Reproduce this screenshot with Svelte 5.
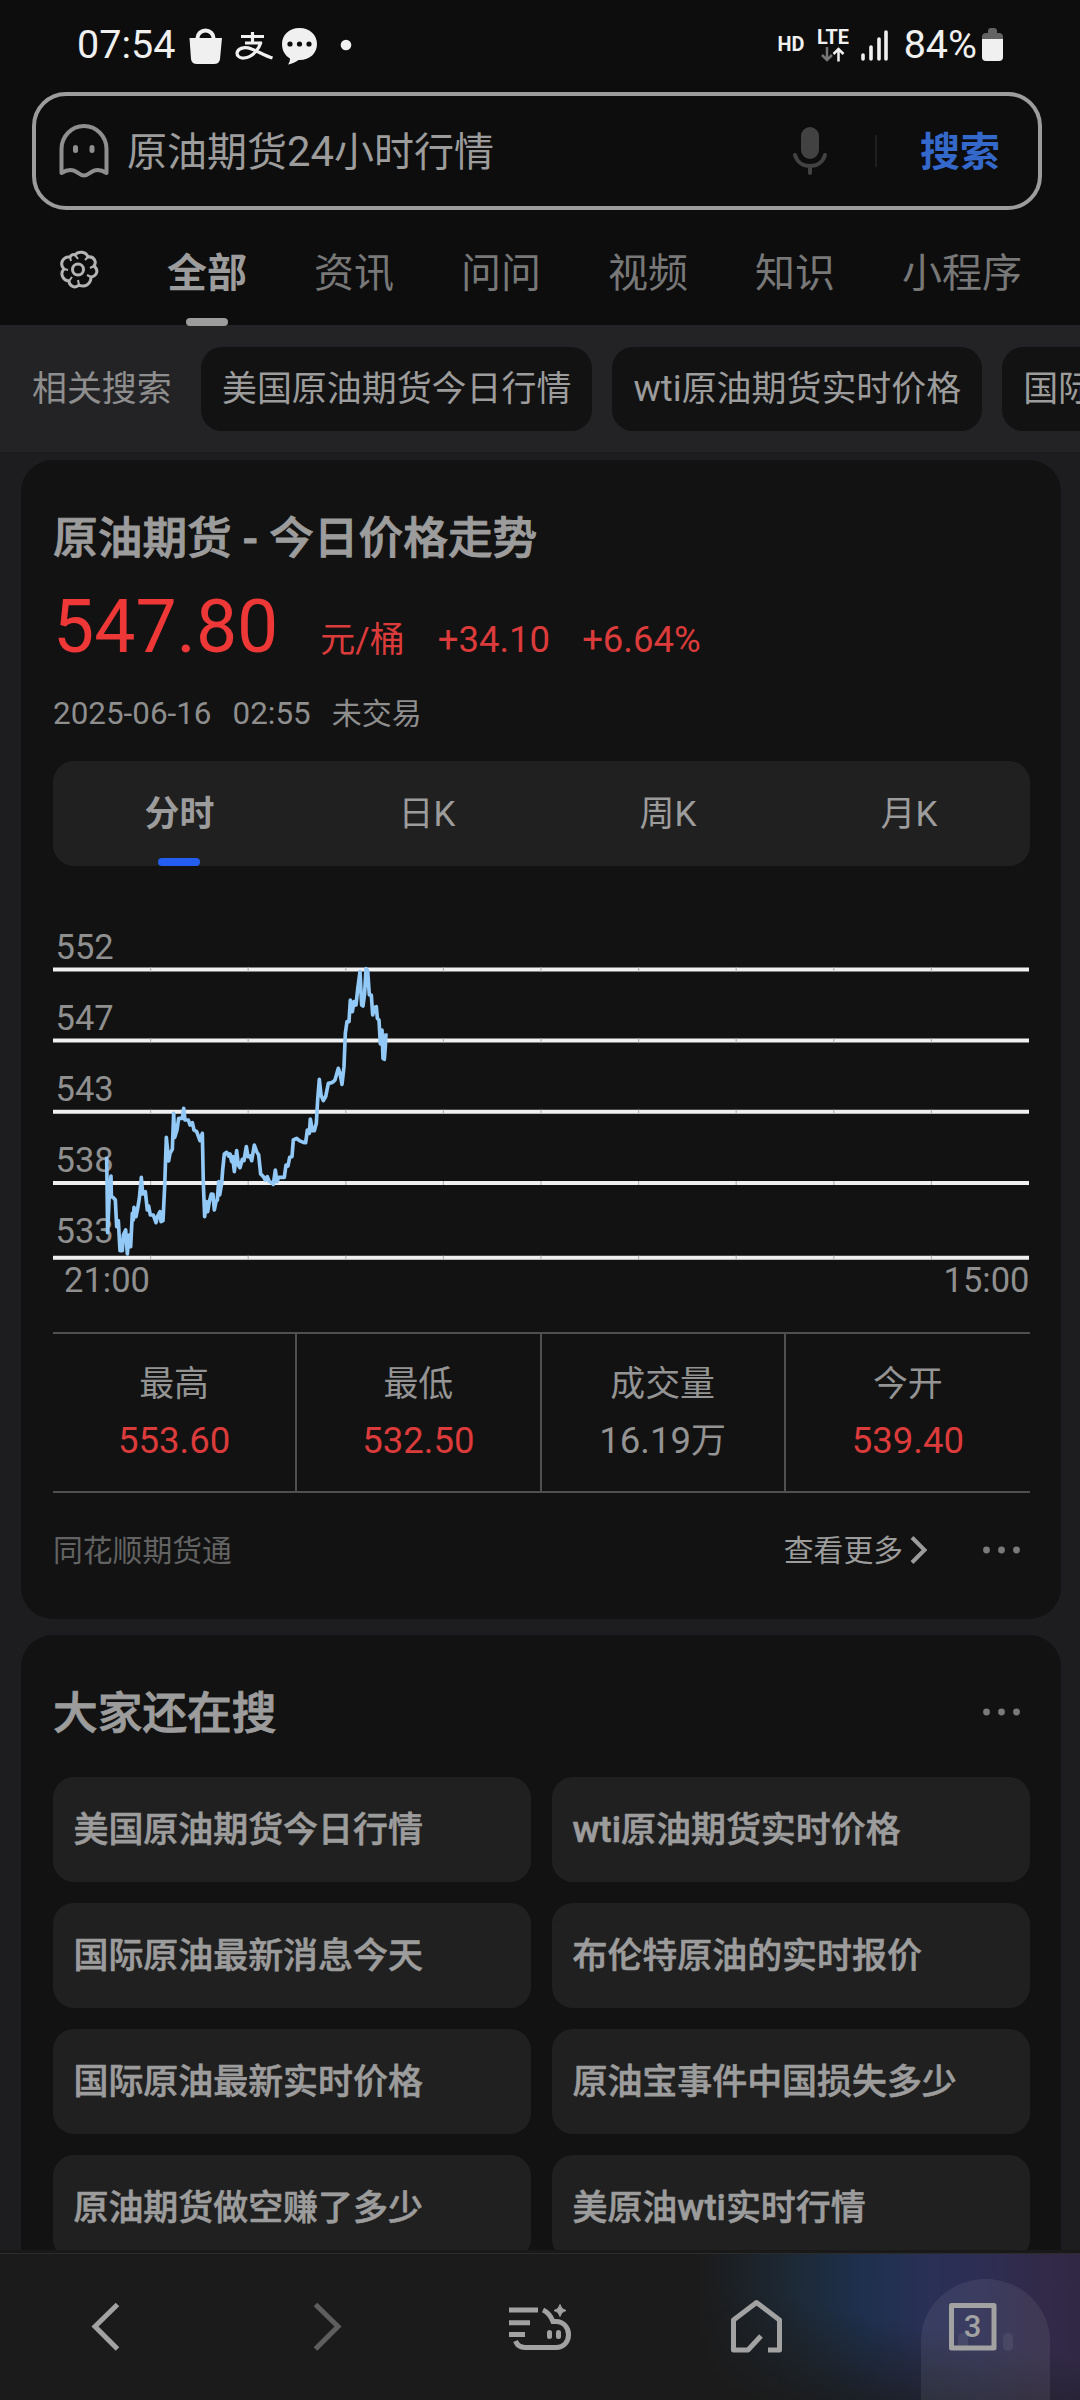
<script>
  const tabs = ['资讯', '问问', '视频', '知识', '小程序'];

  const periods = ['分时', '日K', '周K', '月K'];
  let period = '分时';

  const stats = [
    { label: '最高', value: '553.60', red: true },
    { label: '最低', value: '532.50', red: true },
    { label: '成交量', value: '16.19', unit: '万' },
    { label: '今开', value: '539.40', red: true },
  ];

  // [before, latin, after]
  const related = [
    ['美国原油期货今日行情'],
    ['', 'wti', '原油期货实时价格'],
    ['国际原油最新消息今天'],
  ];

  const suggestions = [
    ['美国原油期货今日行情'],
    ['', 'wti', '原油期货实时价格'],
    ['国际原油最新消息今天'],
    ['布伦特原油的实时报价'],
    ['国际原油最新实时价格'],
    ['原油宝事件中国损失多少'],
    ['原油期货做空赚了多少'],
    ['美原油', 'wti', '实时行情'],
  ];

  const levels = [
    { label: 552, line: 69.4, text: 58.7 },
    { label: 547, line: 140.4, text: 130 },
    { label: 543, line: 211.7, text: 201.3 },
    { label: 538, line: 283, text: 272 },
    { label: 533, line: 357.7, text: 342.6 },
  ];

  const ticks = [1, 2, 3, 4, 5, 6, 7, 8, 9].map(n => n * 97.6);

  // minute prices, in thirds of a pixel
  const points =
    '200,770 203,998 208,880 213,828 214,890 220,893 226,900 230,980 235,962 240,1052 247,1052 250,1005 257,990 ' +
    '262,1062 267,1005 272,1040 277,940 280,960 282,922 288,950 293,925 298,895 304,832 308,882 316,875 322,930 ' +
    '326,918 331,945 340,945 348,968 353,948 360,935 363,965 369,962 372,900 374,860 379,712 386,783 390,760 ' +
    '397,748 401,640 404,712 411,690 416,655 427,655 431,625 435,660 445,660 450,675 457,668 462,690 470,695 ' +
    '480,722 487,700 490,850 494,950 499,905 503,935 508,905 514,882 519,883 523,930 528,905 532,900 536,845 ' +
    '539,885 545,850 548,810 553,762 560,757 566,768 570,762 575,785 578,770 583,815 590,752 595,795 600,803 ' +
    '607,778 612,782 619,740 624,770 630,768 635,782 643,735 650,755 656,765 662,822 670,830 676,840 682,830 ' +
    '688,845 695,848 700,853 706,810 711,845 716,832 733,832 738,795 744,798 749,772 756,770 760,720 770,715 ' +
    '778,722 790,727 797,728 802,690 808,700 811,657 817,692 823,692 829,670 833,600 838,538 843,585 850,602 ' +
    '857,590 865,550 875,548 880,545 885,540 895,505 900,520 906,553 912,500 916,400 921,365 927,365 931,300 ' +
    '937,335 942,305 948,315 953,268 960,215 965,315 969,318 974,280 978,206 983,212 988,285 994,285 998,345 ' +
    '1004,322 1009,320 1012,355 1017,360 1021,432 1026,390 1029,475 1033,478 1036,440 1038,400';
</script>

<style>
  :global(body) {
    background: #1d1d1f;
  }

  main {
    width: 1080px;
    height: 2400px;
    overflow: hidden;
    display: flex;
    flex-direction: column;

    background: #1d1d1f;
    color: #9c9c9c;
    font-family: Roboto, "Noto Sans CJK SC", sans-serif;
    font-size: 34.95px;
    line-height: 1;
    white-space: nowrap;
  }

  svg {
    display: block;
    flex: none;
  }

  .latin {
    font-size: 1.045em;
    line-height: 0;
  }

  header {
    height: 325px;
    flex: none;
    background: #0d0d0d;
  }

  .status {
    height: 92px;
    padding: 0 77px;
    box-sizing: border-box;
    display: flex;
    justify-content: space-between;

    color: #f0f0f0;
    font-size: 39.5px;
    line-height: 89px;
  }
  .status > div {
    display: flex;
  }
  .status .notes {
    margin-left: 12px;
  }
  .status .signal {
    margin-right: 16px;
  }

  .search {
    width: 1010px;
    height: 118px;
    margin-left: 32px;
    padding: 0 38px 0 23px;
    box-sizing: border-box;
    border: 4px solid #9c9c9c;
    border-radius: 34px;

    display: flex;
    align-items: center;
    font-size: 40px;
  }
  .search .query {
    flex: 1;
    margin-left: 18px;
    padding-top: 4px;
  }
  .search .divider {
    width: 2px;
    height: 32px;
    margin: 0 43px 0 47px;
    background: #1f1f20;
  }
  .search .go {
    padding-top: 4px;
    color: #3568cb;
    font-weight: 700;
  }

  nav {
    height: 115px;
    padding-left: 59px;
    display: flex;

    color: #787878;
    font-size: 40px;
    line-height: 127px;
  }
  nav svg {
    margin: 40px 28px 0 0;
  }
  nav span {
    margin-left: 67px;
  }
  nav .active {
    margin-left: 40px;
    position: relative;
    color: #9c9c9c;
    font-weight: 700;
  }
  nav .active::after {
    content: "";
    position: absolute;
    left: 19px;
    top: 108px;
    width: 42px;
    height: 8px;
    border-radius: 4px;
    background: #9c9c9c;
  }

  .related {
    height: 127px;
    flex: none;
    padding-left: 32px;
    box-sizing: border-box;
    overflow: hidden;

    display: flex;
    align-items: center;
    gap: 20px;
    background: #232325;
  }
  .related .label {
    width: 149px;
    flex: none;
    padding-top: 3px;
    color: #8e8e8e;
  }
  .related .chip {
    height: 84px;
    flex: none;
    padding: 0 21px;
    border-radius: 21px;
    background: #121212;
    line-height: 86px;
  }

  .results {
    flex: 1;
    min-height: 0;
    overflow: hidden;
    padding: 8px 19px 0 21px;
  }

  .card {
    padding: 0 31px 0 32px;
    border-radius: 32px;
    background: #121212;
    overflow: hidden;
  }
  .card + .card {
    margin-top: 16px;
  }

  h2 {
    margin: 0;
    font-size: 44.7px;
    line-height: 45px;
    font-weight: 500;
    -webkit-text-stroke: 0.9px #9c9c9c;
  }

  .quote {
    height: 1159px;
  }
  .quote h2 {
    padding-top: 57px;
  }

  .price {
    height: 100px;
    margin-top: 15px;
    display: flex;
    align-items: baseline;
    color: #dc3b3b;
    font-size: 36.5px;
    line-height: 100px;
  }
  .price strong {
    color: #ee3737;
    font-size: 73.3px;
    font-weight: 400;
    margin-right: 42px;
  }
  .price .unit {
    font-size: 35px;
    margin-right: 33px;
  }
  .price .diff {
    margin-right: 32px;
  }

  .time {
    height: 30px;
    margin-top: 22px;
    display: flex;
    align-items: baseline;
    gap: 21px;
    font-size: 31.4px;
    line-height: 30px;
    color: #8e8e8e;
  }
  .time .state {
    font-size: 30px;
  }

  .periods {
    height: 105px;
    margin-top: 32px;
    border-radius: 21px;
    background: #202020;
    display: flex;
    justify-content: space-around;
    line-height: 107px;
  }
  .periods span {
    margin-left: -1px;
  }
  .periods .active {
    position: relative;
    font-weight: 700;
  }
  .periods .active::after {
    content: "";
    position: absolute;
    left: 13px;
    top: 97px;
    width: 42px;
    height: 8px;
    border-radius: 4px;
    background: #235ef0;
  }

  .chart {
    margin-top: 34px;
  }
  .chart text {
    fill: #8f8f8f;
    font-size: 34.5px;
  }
  .chart polyline {
    fill: none;
    stroke: #92c9f6;
    stroke-width: 11;
    stroke-linejoin: round;
  }

  .stats {
    height: 157px;
    margin-top: 22px;
    border: 2px solid #505050;
    border-width: 2px 0;
    display: grid;
    grid-template-columns: repeat(4, 1fr);
    text-align: center;
  }
  .stats > div {
    border-right: 2px solid #505050;
  }
  .stats > div:last-child {
    border: 0;
  }
  .stats p {
    margin: 0;
    height: 57px;
    line-height: 57px;
    color: #949494;
  }
  .stats p:first-child {
    margin-top: 22px;
  }
  .stats p.red {
    color: #dc3b3b;
  }

  .more {
    height: 114px;
    display: flex;
    align-items: center;
    color: #9c9c9c;
    font-size: 29.8px;
  }
  .more span {
    padding-top: 2px;
  }
  .more .source {
    flex: 1;
    color: #636363;
  }
  .more .arrow {
    margin: 0 51px 0 7px;
  }

  .also {
    height: 700px;
  }
  .also .head {
    height: 142px;
    padding-top: 11px;
    box-sizing: border-box;
    display: flex;
    align-items: center;
    justify-content: space-between;
  }
  .also h2 {
    padding-top: 5px;
  }
  .dots {
    padding-right: 7px;
    fill: #7a7a7a;
  }

  .grid {
    display: grid;
    grid-template-columns: 1fr 1fr;
    gap: 21px;
  }
  .grid > div {
    height: 105px;
    padding-left: 20.5px;
    border-radius: 21px;
    background: #202020;
    font-weight: 500;
    -webkit-text-stroke: 0.6px #9c9c9c;
    line-height: 108px;
  }

  footer {
    height: 150px;
    flex: none;
    padding-top: 3px;
    box-sizing: border-box;
    background: #191919;
  }
  .toolbar {
    height: 147px;
    box-sizing: border-box;
    border-top: 1px solid #2c2c2d;
    display: grid;
    grid-template-columns: repeat(5, 216px);

    background:
      linear-gradient(12deg, #1b1b1b 0, #1b1b1b 42%, rgba(27, 27, 27, 0) 72%),
      linear-gradient(90deg, #1b1b1b 700px, #1d2a38 800px, #1e304e 865px, #2a3056 930px, #2d2e54 980px, #322a48 1040px, #302845 1080px);
  }
  .toolbar svg {
    fill: none;
    stroke: #a2a2a2;
    stroke-width: 5;
  }
  .toolbar text {
    fill: #a2a2a2;
    stroke: none;
    font-size: 31px;
    font-weight: 500;
  }
  .toolbar .ghost {
    fill: rgba(255, 255, 255, 0.07);
    stroke: none;
  }
</style>

<main>

  <header>
    <div class="status">
      <div>
        07:54
        <svg class="notes" width="170" height="92" viewBox="187 0 170 92" fill="#f0f0f0">
          <path d="M189.500 38h32.500l-2 21q-.5 5-6 5h-17q-5.500 0-6-5z" />
          <path d="M197.500 40v-2a8 7.500 0 0 1 16 0v2" fill="none" stroke="#f0f0f0" stroke-width="4" />
          <g fill="none" stroke="#f0f0f0" stroke-width="3.200">
            <path d="M241 36.500h23M252.500 32v11M245 43h17" />
            <path d="M261 42c-2 7-8 15-17 16-5 .5-8-3-6.500-6.500 2-4.500 9-4.500 14-2.500 7 2.500 13 6.500 21 9" />
          </g>
          <path d="M299.500 28c10.500 0 17.500 7 17.500 16s-7 16-17.500 16h-1c-3 2-6 4-10.500 4.500 1.500-2 2-4 2-6-5-3-8-8-8-14.500 0-9 7-16 17.500-16z" />
          <g fill="#0d0d0d">
            <circle cx="290" cy="44" r="2.600" />
            <circle cx="299.500" cy="44" r="2.600" />
            <circle cx="309" cy="44" r="2.600" />
          </g>
          <circle cx="346" cy="45" r="5.300" />
        </svg>
      </div>
      <div>
        <svg class="signal" width="112" height="92" viewBox="776 0 112 92" fill="#f0f0f0">
          <text x="777.500" y="51" font-size="19.500" font-weight="700" textLength="27" lengthAdjust="spacingAndGlyphs">HD</text>
          <text x="817" y="44" font-size="19.500" font-weight="700" textLength="32" lengthAdjust="spacingAndGlyphs">LTE</text>
          <path d="M827 47v13M822 55l5 5 5-5" fill="none" stroke="#767676" stroke-width="2.500" />
          <path d="M838.500 61.500V49M833.500 54l5-5 5 5" fill="none" stroke="#f0f0f0" stroke-width="2.500" />
          <path d="M863 55v4M871 47v12M879 39v20M886 32v27" stroke="#f0f0f0" stroke-width="3.600" stroke-linecap="round" />
        </svg>
        84%
        <svg width="26" height="92" viewBox="977 0 26 92">
          <path d="M982 41v-4q0-4 4-4h2v-2q0-3 3-3h3q3 0 3 3v2h2q4 0 4 4v4z" fill="#636363" />
          <path d="M982 39h21v18q0 4-4 4h-13q-4 0-4-4z" fill="#f0f0f0" />
        </svg>
      </div>
    </div>

    <div class="search">
      <svg width="50" height="54" viewBox="0 1 50 54" fill="none" stroke="#8f8f8f" stroke-width="4" stroke-linejoin="round">
        <path d="M2.500 50V26a22.500 23 0 0 1 45 0V50c-4-2.500-8-3.500-12-2.500-4 1-6 5-10.500 5s-6.500-4-10.500-5c-4-1-8 0-12 2.500z" />
        <path d="M16.500 24.500v3M33 24.500v3" stroke-width="5" stroke-linecap="round" />
      </svg>
      <div class="query">原油期货<span class="latin">24</span>小时行情</div>
      <svg width="36" height="50" viewBox="0 0 36 50" fill="none" stroke="#424242" stroke-width="4" stroke-linecap="round">
        <rect x="9" y="1" width="18" height="32" rx="9" fill="#424242" stroke="none" />
        <path d="M3 29c2 7 8 11 15 11s13-4 15-11M18 41v6" />
      </svg>
      <div class="divider"></div>
      <div class="go">搜索</div>
    </div>

    <nav>
      <svg width="40" height="40" viewBox="0 0 40 40" fill="none" stroke="#b4b4b4" stroke-width="3" stroke-linejoin="round">
        <path d="M16 5c3-4 11-4 13 2 6-1 9 5 6 9 5 4 3 10-3 11 0 7-6 11-12 8-4 4-10 1-10-4-7-1-9-8-5-12C0 14 4 6 11 7c1-2 3-3 5-2z" />
        <path d="M16 5l3 4M29 7l-3 3M35 16l-4 2M32 27l-4-2M20 35l-1-5M10 31l3-4M5 19l4 1M11 7l1 4" stroke-width="2" />
        <circle cx="19" cy="19.500" r="5.500" />
      </svg>
      <span class="active">全部</span>
      {#each tabs as tab}
        <span>{tab}</span>
      {/each}
    </nav>
  </header>

  <div class="related">
    <div class="label">相关搜索</div>
    {#each related as [before, latin = '', after = '']}
      <div class="chip">{before}<span class="latin">{latin}</span>{after}</div>
    {/each}
  </div>

  <div class="results">

    <section class="card quote">
      <h2>原油期货 - 今日价格走势</h2>

      <div class="price">
        <strong>547.80</strong>
        <span class="unit">元/桶</span>
        <span class="diff">+34.10</span>
        <span>+6.64%</span>
      </div>

      <div class="time">
        <span>2025-06-16</span>
        <span>02:55</span>
        <span class="state">未交易</span>
      </div>

      <div class="periods">
        {#each periods as name}
          <span class:active={name === period}>{name}</span>
        {/each}
      </div>

      <svg class="chart" width="977" height="410" viewBox="0 0 977 410">
        {#each levels as level}
          <text x="2.500" y={level.text}>{level.label}</text>
          <line x1="0" x2="976" y1={level.line} y2={level.line} stroke="#f0f0f0" stroke-width="4" />
          {#each ticks as x}
            <line x1={x} x2={x} y1={level.line - 2} y2={level.line + 2} stroke="#b5b5b5" stroke-width="1.200" />
          {/each}
        {/each}
        <polyline {points} transform="translate(-13 0) scale(0.33333)" />
        <text x="11" y="391.500">21:00</text>
        <text x="976.500" y="391.500" text-anchor="end">15:00</text>
      </svg>

      <div class="stats">
        {#each stats as stat}
          <div>
            <p>{stat.label}</p>
            <p class:red={stat.red}><span class="latin">{stat.value}</span>{stat.unit ?? ''}</p>
          </div>
        {/each}
      </div>

      <div class="more">
        <span class="source">同花顺期货通</span>
        <span>查看更多</span>
        <svg class="arrow" width="18" height="30" viewBox="0 0 18 30" fill="none" stroke="#9c9c9c" stroke-width="4">
          <path d="M2 2.500L14.500 15 2 27.500" />
        </svg>
        <svg class="dots" width="44" height="8" viewBox="0 0 44 8">
          <circle cx="7.500" cy="4" r="3.400" />
          <circle cx="22.500" cy="4" r="3.400" />
          <circle cx="37.500" cy="4" r="3.400" />
        </svg>
      </div>
    </section>

    <section class="card also">
      <div class="head">
        <h2>大家还在搜</h2>
        <svg class="dots" width="44" height="8" viewBox="0 0 44 8">
          <circle cx="7.500" cy="4" r="3.400" />
          <circle cx="22.500" cy="4" r="3.400" />
          <circle cx="37.500" cy="4" r="3.400" />
        </svg>
      </div>

      <div class="grid">
        {#each suggestions as [before, latin = '', after = '']}
          <div>{before}<span class="latin">{latin}</span>{after}</div>
        {/each}
      </div>
    </section>

  </div>

  <footer>
    <div class="toolbar">
      <svg width="216" height="146" viewBox="0 2254 216 146">
        <path d="M117.500 2304.500L95 2326.500l22.500 22.500" />
      </svg>
      <svg width="216" height="146" viewBox="216 2254 216 146">
        <path d="M315.500 2304.500l22.500 22-22.500 22.500" stroke="#5e5e5e" />
      </svg>
      <svg width="216" height="146" viewBox="432 2254 216 146">
        <path d="M509 2310h29M509 2322.800h21M509 2334.500h16" />
        <path d="M515.500 2341c2 5 5 6.500 9.500 6.500h31c8 0 12.500-6 12.500-13s-5-13-12.500-13h-3c-2-5-4.500-9-10-11.500" />
        <path d="M549.500 2332.500v4M558.500 2332.500v4" stroke-linecap="round" />
        <path d="M560 2304.500q1 5 6 6-5 1-6 6-1-5-6-6 5-1 6-6z" fill="#a2a2a2" stroke-width="1" />
      </svg>
      <svg width="216" height="146" viewBox="648 2254 216 146" stroke-linejoin="round">
        <path d="M761 2336l-13 14h-14.500v-30l23-17.500 23 17.500v30H768" />
      </svg>
      <svg width="216" height="146" viewBox="864 2254 216 146" stroke-linejoin="round">
        <path class="ghost" d="M921 2400v-59a64.500 62 0 0 1 129 0v59z" />
        <rect class="ghost" x="958" y="2333" width="10" height="18" rx="5" />
        <rect class="ghost" x="1003" y="2333" width="10" height="18" rx="5" />
        <rect x="951.500" y="2305.500" width="42.500" height="42.500" />
        <text x="972.500" y="2337" text-anchor="middle">3</text>
      </svg>
    </div>
  </footer>

</main>
